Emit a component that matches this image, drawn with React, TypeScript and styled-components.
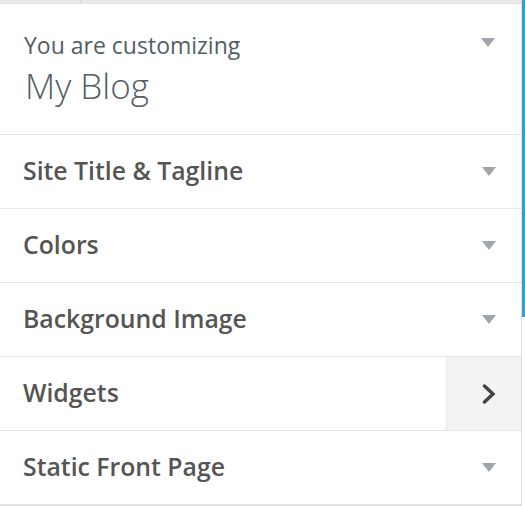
import styled, { createGlobalStyle } from 'styled-components';

const GlobalStyle = createGlobalStyle`
  html, body {
    margin: 0;
    padding: 0;
    background: #fff;
  }
  body {
    font-family: 'Open Sans', 'Noto Sans', sans-serif;
  }
  svg {
    display: block;
  }
`;

const Frame = styled.div`
  display: flex;
  width: 525px;
  height: 506px;
  overflow: hidden;
`;

const Panel = styled.div`
  display: flex;
  flex-direction: column;
  width: 521px;
  border-right: 1px solid #dcdcdc;
  background: #fff;
`;

const Scrollbar = styled.div`
  width: 3px;
  display: flex;
  flex-direction: column;
`;

const Thumb = styled.div`
  height: 317px;
  background: #2ea2cc;
`;

const TopStrip = styled.div`
  display: flex;
  height: 3px;
  background: #e8e8e8;
  border-bottom: 1px solid #e3e3e3;
`;

const StripCell = styled.div<{ $w?: number }>`
  width: ${(p) => (p.$w ? `${p.$w}px` : 'auto')};
  flex: ${(p) => (p.$w ? 'none' : '1')};
  border-right: ${(p) => (p.$w ? '1px solid #d6d6d6' : 'none')};
`;

const Header = styled.div`
  display: flex;
  justify-content: space-between;
  align-items: flex-start;
  height: 131px;
  padding: 25px 26px 0 24px;
  box-sizing: border-box;
  border-bottom: 1px solid #e5e5e5;
`;

const HeaderText = styled.div`
  display: flex;
  flex-direction: column;
  color: #555d66;
`;

const Eyebrow = styled.span`
  font-size: 23px;
  line-height: 33px;
`;

const SiteName = styled.span`
  font-size: 35px;
  font-weight: 300;
  line-height: 47px;
  margin-left: 1px;
`;

const Row = styled.div`
  display: flex;
  align-items: stretch;
  height: 74px;
  box-sizing: border-box;
  border-bottom: 1px solid #e5e5e5;
`;

const RowTitle = styled.div`
  flex: 1;
  display: flex;
  align-items: center;
  padding: 0 0 3px 23px;
  font-size: 24.8px;
  font-weight: 600;
  color: #555;
`;

const Toggle = styled.div<{ $nav?: boolean }>`
  width: 75px;
  display: flex;
  align-items: center;
  justify-content: center;
  padding-left: 10px;
  box-sizing: border-box;
  background: ${(p) => (p.$nav ? '#f3f3f3' : 'transparent')};
  border-left: 1px solid ${(p) => (p.$nav ? '#e8e8e8' : 'transparent')};
`;

const HeaderToggle = styled.div`
  padding-top: 9px;
`;

const Footer = styled.div`
  flex: 1;
  background: #eee;
  border-top: 1px solid #dcdcdc;
`;

const Arrow = () => (
  <svg width="14" height="9" viewBox="0 0 14 9">
    <polygon points="0,0 14,0 7,9" fill="#a0a5aa" />
  </svg>
);

const Chevron = () => (
  <svg width="14" height="20" viewBox="0 0 14 20">
    <polyline
      points="2.5,2 11,10 2.5,18"
      fill="none"
      stroke="#444"
      strokeWidth="3.4"
      strokeLinecap="round"
      strokeLinejoin="miter"
    />
  </svg>
);

const sections = [
  { title: 'Site Title & Tagline' },
  { title: 'Colors' },
  { title: 'Background Image' },
  { title: 'Widgets', nav: true },
  { title: 'Static Front Page' },
];

export default function App() {
  return (
    <>
      <GlobalStyle />
      <Frame>
        <Panel>
          <TopStrip>
            <StripCell $w={80} />
            <StripCell />
          </TopStrip>
          <Header>
            <HeaderText>
              <Eyebrow>You are customizing</Eyebrow>
              <SiteName>My Blog</SiteName>
            </HeaderText>
            <HeaderToggle>
              <Arrow />
            </HeaderToggle>
          </Header>
          {sections.map((s) => (
            <Row key={s.title}>
              <RowTitle>{s.title}</RowTitle>
              <Toggle $nav={s.nav}>{s.nav ? <Chevron /> : <Arrow />}</Toggle>
            </Row>
          ))}
          <Footer />
        </Panel>
        <Scrollbar>
          <Thumb />
        </Scrollbar>
      </Frame>
    </>
  );
}
